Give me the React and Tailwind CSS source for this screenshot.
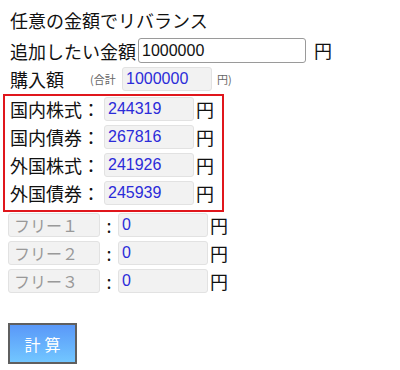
const jp = "font-['Noto_Sans_CJK_JP',sans-serif]";
const num = "font-['Liberation_Sans',Arial,sans-serif]";

const allocations = [
  { label: "国内株式", value: "244319" },
  { label: "国内債券", value: "267816" },
  { label: "外国株式", value: "241926" },
  { label: "外国債券", value: "245939" },
];

const freeRows = [
  { label: "フリー１", value: "0" },
  { label: "フリー２", value: "0" },
  { label: "フリー３", value: "0" },
];

export default function App() {
  return (
    <div className={`w-[400px] h-[370px] bg-white text-[#111] ${jp} pt-[8px]`}>
      {/* Title */}
      <h1 className="pl-[10px] text-[18px] leading-[24px] font-normal">任意の金額でリバランス</h1>

      {/* Amount to add */}
      <div className="flex items-center mt-[6px] pl-[10px] h-[25px]">
        <span className="text-[18px] leading-[24px] w-[128px]">追加したい金額</span>
        <input
          readOnly
          value="1000000"
          className={`${num} w-[168px] h-[25px] border border-[#9a9a9a] rounded-[3px] px-[3px] text-[16px] text-[#111] outline-none`}
        />
        <span className="text-[18px] ml-[8px]">円</span>
      </div>

      {/* Total purchase */}
      <div className="flex items-center mt-[4px] pl-[10px] h-[24px]">
        <span className="text-[18px] leading-[24px] w-[80px]">購入額</span>
        <span className="text-[11px] text-[#666] w-[32px]">(合計</span>
        <input
          readOnly
          value="1000000"
          className={`${num} w-[90px] h-[24px] bg-[#f2f2f2] border border-[#e2e2e2] rounded-[3px] px-[3px] text-[16px] text-[#2b2bd9] outline-none`}
        />
        <span className="text-[11px] text-[#666] ml-[5px]">円)</span>
      </div>

      {/* Allocation box */}
      <div className="mt-[3px] ml-[3px] w-[221px] border-2 border-[#e0161c] pl-[5px] pt-[1px] pb-[5px] flex flex-col gap-[4px]">
        {allocations.map((a) => (
          <div key={a.label} className="flex items-center h-[24px]">
            <span className="text-[18px] leading-[24px] w-[94px]">{a.label}：</span>
            <input
              readOnly
              value={a.value}
              className={`${num} w-[90px] h-[24px] bg-[#f2f2f2] border border-[#e2e2e2] rounded-[3px] px-[3px] text-[16px] text-[#2b2bd9] outline-none`}
            />
            <span className="text-[18px] ml-[2px]">円</span>
          </div>
        ))}
      </div>

      {/* Free rows */}
      <div className="mt-[1px] pl-[8px] flex flex-col gap-[4px]">
        {freeRows.map((r) => (
          <div key={r.label} className="flex items-center h-[24px]">
            <input
              readOnly
              value={r.label}
              className={`${jp} w-[92px] h-[24px] bg-[#f2f2f2] border border-[#e2e2e2] rounded-[3px] px-[5px] text-[16px] text-[#999] outline-none`}
            />
            <span className="text-[18px] w-[18px] text-center">:</span>
            <input
              readOnly
              value={r.value}
              className={`${num} w-[90px] h-[24px] bg-[#f2f2f2] border border-[#e2e2e2] rounded-[3px] px-[3px] text-[16px] text-[#2b2bd9] outline-none`}
            />
            <span className="text-[18px] ml-[2px]">円</span>
          </div>
        ))}
      </div>

      {/* Calculate button */}
      <div className="pl-[8px] mt-[30px]">
        <button className="w-[69px] h-[41px] border-2 border-[#5f5f5f] bg-gradient-to-b from-[#5a98f8] to-[#72c6ff] text-white text-[16px] tracking-[4px] pl-[4px]">
          計算
        </button>
      </div>
    </div>
  );
}
